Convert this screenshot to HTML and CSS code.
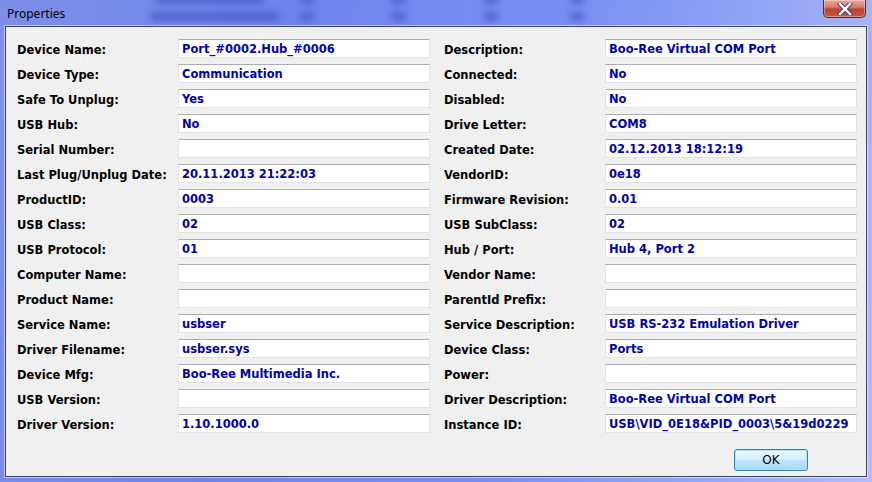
FILE: index.html
```html
<!DOCTYPE html>
<html lang="en">
<head>
    <meta charset="UTF-8">
    <title>Properties</title>
    <link rel="stylesheet" href="styles.css">
</head>
<body>
    <div class="window">
        <div class="titlebar">
            <span class="title">Properties</span>
            <!-- blurred stuff behind the glass -->
            <span class="blur b1"></span>
            <span class="blur b2"></span>
            <span class="blur b3"></span>
            <span class="blur b4"></span>
            <span class="blur b5"></span>
            <span class="blur b6"></span>
            <span class="blur b7"></span>
            <span class="blur b8"></span>
            <span class="blur b9"></span>
            <span class="blur b10"></span>
            <button class="close-btn">
                <svg width="16" height="12" viewBox="0 0 16 12">
                    <path d="M3 1 L13 11 M13 1 L3 11" stroke="#3a3f6a" stroke-width="4.2" stroke-linecap="square"/>
                    <path d="M3 1 L13 11 M13 1 L3 11" stroke="#ffffff" stroke-width="2.4" stroke-linecap="square"/>
                </svg>
            </button>
        </div>
        <div class="client">
            <div class="props">
                <label>Device Name:</label><div class="field">Port_#0002.Hub_#0006</div>
                <label>Description:</label><div class="field">Boo-Ree Virtual COM Port</div>

                <label>Device Type:</label><div class="field">Communication</div>
                <label>Connected:</label><div class="field">No</div>

                <label>Safe To Unplug:</label><div class="field">Yes</div>
                <label>Disabled:</label><div class="field">No</div>

                <label>USB Hub:</label><div class="field">No</div>
                <label>Drive Letter:</label><div class="field">COM8</div>

                <label>Serial Number:</label><div class="field"></div>
                <label>Created Date:</label><div class="field">02.12.2013 18:12:19</div>

                <label>Last Plug/Unplug Date:</label><div class="field">20.11.2013 21:22:03</div>
                <label>VendorID:</label><div class="field">0e18</div>

                <label>ProductID:</label><div class="field">0003</div>
                <label>Firmware Revision:</label><div class="field">0.01</div>

                <label>USB Class:</label><div class="field">02</div>
                <label>USB SubClass:</label><div class="field">02</div>

                <label>USB Protocol:</label><div class="field">01</div>
                <label>Hub / Port:</label><div class="field">Hub 4, Port 2</div>

                <label>Computer Name:</label><div class="field"></div>
                <label>Vendor Name:</label><div class="field"></div>

                <label>Product Name:</label><div class="field"></div>
                <label>ParentId Prefix:</label><div class="field"></div>

                <label>Service Name:</label><div class="field">usbser</div>
                <label>Service Description:</label><div class="field">USB RS-232 Emulation Driver</div>

                <label>Driver Filename:</label><div class="field">usbser.sys</div>
                <label>Device Class:</label><div class="field">Ports</div>

                <label>Device Mfg:</label><div class="field">Boo-Ree Multimedia Inc.</div>
                <label>Power:</label><div class="field"></div>

                <label>USB Version:</label><div class="field"></div>
                <label>Driver Description:</label><div class="field">Boo-Ree Virtual COM Port</div>

                <label>Driver Version:</label><div class="field">1.10.1000.0</div>
                <label>Instance ID:</label><div class="field">USB\VID_0E18&amp;PID_0003\5&amp;19d0229</div>
            </div>
            <div class="buttons">
                <button class="ok-button">OK</button>
            </div>
        </div>
    </div>
</body>
</html>
```

FILE: styles.css
```css
body {
    margin: 0;
    width: 872px;
    height: 482px;
    overflow: hidden;
    font-family: 'DejaVu Sans', sans-serif;
}

.window {
    width: 872px;
    height: 482px;
    box-sizing: border-box;
    padding: 0 5px 5px 5px;
    background: linear-gradient(100deg, #7d8fe6 0%, #6f83ec 30%, #7a8ff2 60%, #9aaaf6 85%, #b2bef8 100%);
    display: flex;
    flex-direction: column;
}

.titlebar {
    height: 26px;
    position: relative;
    overflow: hidden;
}

.title {
    position: absolute;
    left: 2px;
    top: 5px;
    font-family: 'Noto Sans', sans-serif;
    font-size: 12px;
    color: #000;
    z-index: 2;
}

/* blurred window content behind the glass */
.blur {
    position: absolute;
    height: 9px;
    border-radius: 5px;
    background: #4a5cc8;
    filter: blur(3.5px);
    opacity: 0.8;
}
.b1 { left: 145px; top: 12px; width: 130px; }
.b2 { left: 294px; top: 12px; width: 16px; }
.b3 { left: 386px; top: 12px; width: 16px; }
.b4 { left: 478px; top: 12px; width: 16px; }
.b5 { left: 564px; top: 12px; width: 16px; }
.b6 { left: 150px; top: -5px; width: 110px; }
.b7 { left: 294px; top: -5px; width: 16px; }
.b8 { left: 386px; top: -5px; width: 16px; }
.b9 { left: 478px; top: -5px; width: 16px; }
.b10 { left: 564px; top: -5px; width: 16px; }

.close-btn {
    position: absolute;
    right: 1px;
    top: 0;
    width: 43px;
    height: 18px;
    padding: 0;
    border: 1px solid #5a2a2a;
    border-top: none;
    border-radius: 0 0 5px 5px;
    background: linear-gradient(#e6a89a 0%, #d7806e 40%, #c2432c 55%, #c85a3e 100%);
    display: flex;
    align-items: center;
    justify-content: center;
    box-shadow: inset 0 0 0 1px rgba(255, 255, 255, 0.35);
}

.client {
    flex: 1;
    background: #f0f0f0;
    border: 1px solid #3d4660;
    box-shadow: 0 0 0 1px rgba(255, 255, 255, 0.5);
    padding: 12px 9px 0 11px;
    display: flex;
    flex-direction: column;
}

.props {
    display: grid;
    grid-template-columns: 161px 252px 175px 252px;
    grid-auto-rows: 19px;
    row-gap: 6px;
    align-items: center;
}

.props label {
    font-weight: bold;
    font-size: 11.5px;
    color: #000;
    padding-top: 2px;
}

.props label:nth-child(4n+3) {
    padding-left: 14px;
}

.field {
    height: 19px;
    box-sizing: border-box;
    background: #fff;
    border: 1px solid #e2e3ea;
    border-top-color: #abadb3;
    padding-left: 3px;
    font-weight: bold;
    font-size: 11.5px;
    line-height: 19px;
    color: #0000b4;
    white-space: nowrap;
    overflow: hidden;
}

.buttons {
    display: flex;
    justify-content: flex-end;
    padding-top: 16px;
    padding-right: 49px;
}

.ok-button {
    width: 74px;
    height: 22px;
    border: 1px solid #3c7fb1;
    border-radius: 3px;
    background: linear-gradient(#eaf6fd 0%, #d9f0fc 45%, #bee6fd 50%, #a7d9f5 100%);
    box-shadow: inset 0 0 0 1px #a8e5fb;
    font-family: 'DejaVu Sans', sans-serif;
    font-size: 12px;
    color: #000;
    padding: 0;
}
```
